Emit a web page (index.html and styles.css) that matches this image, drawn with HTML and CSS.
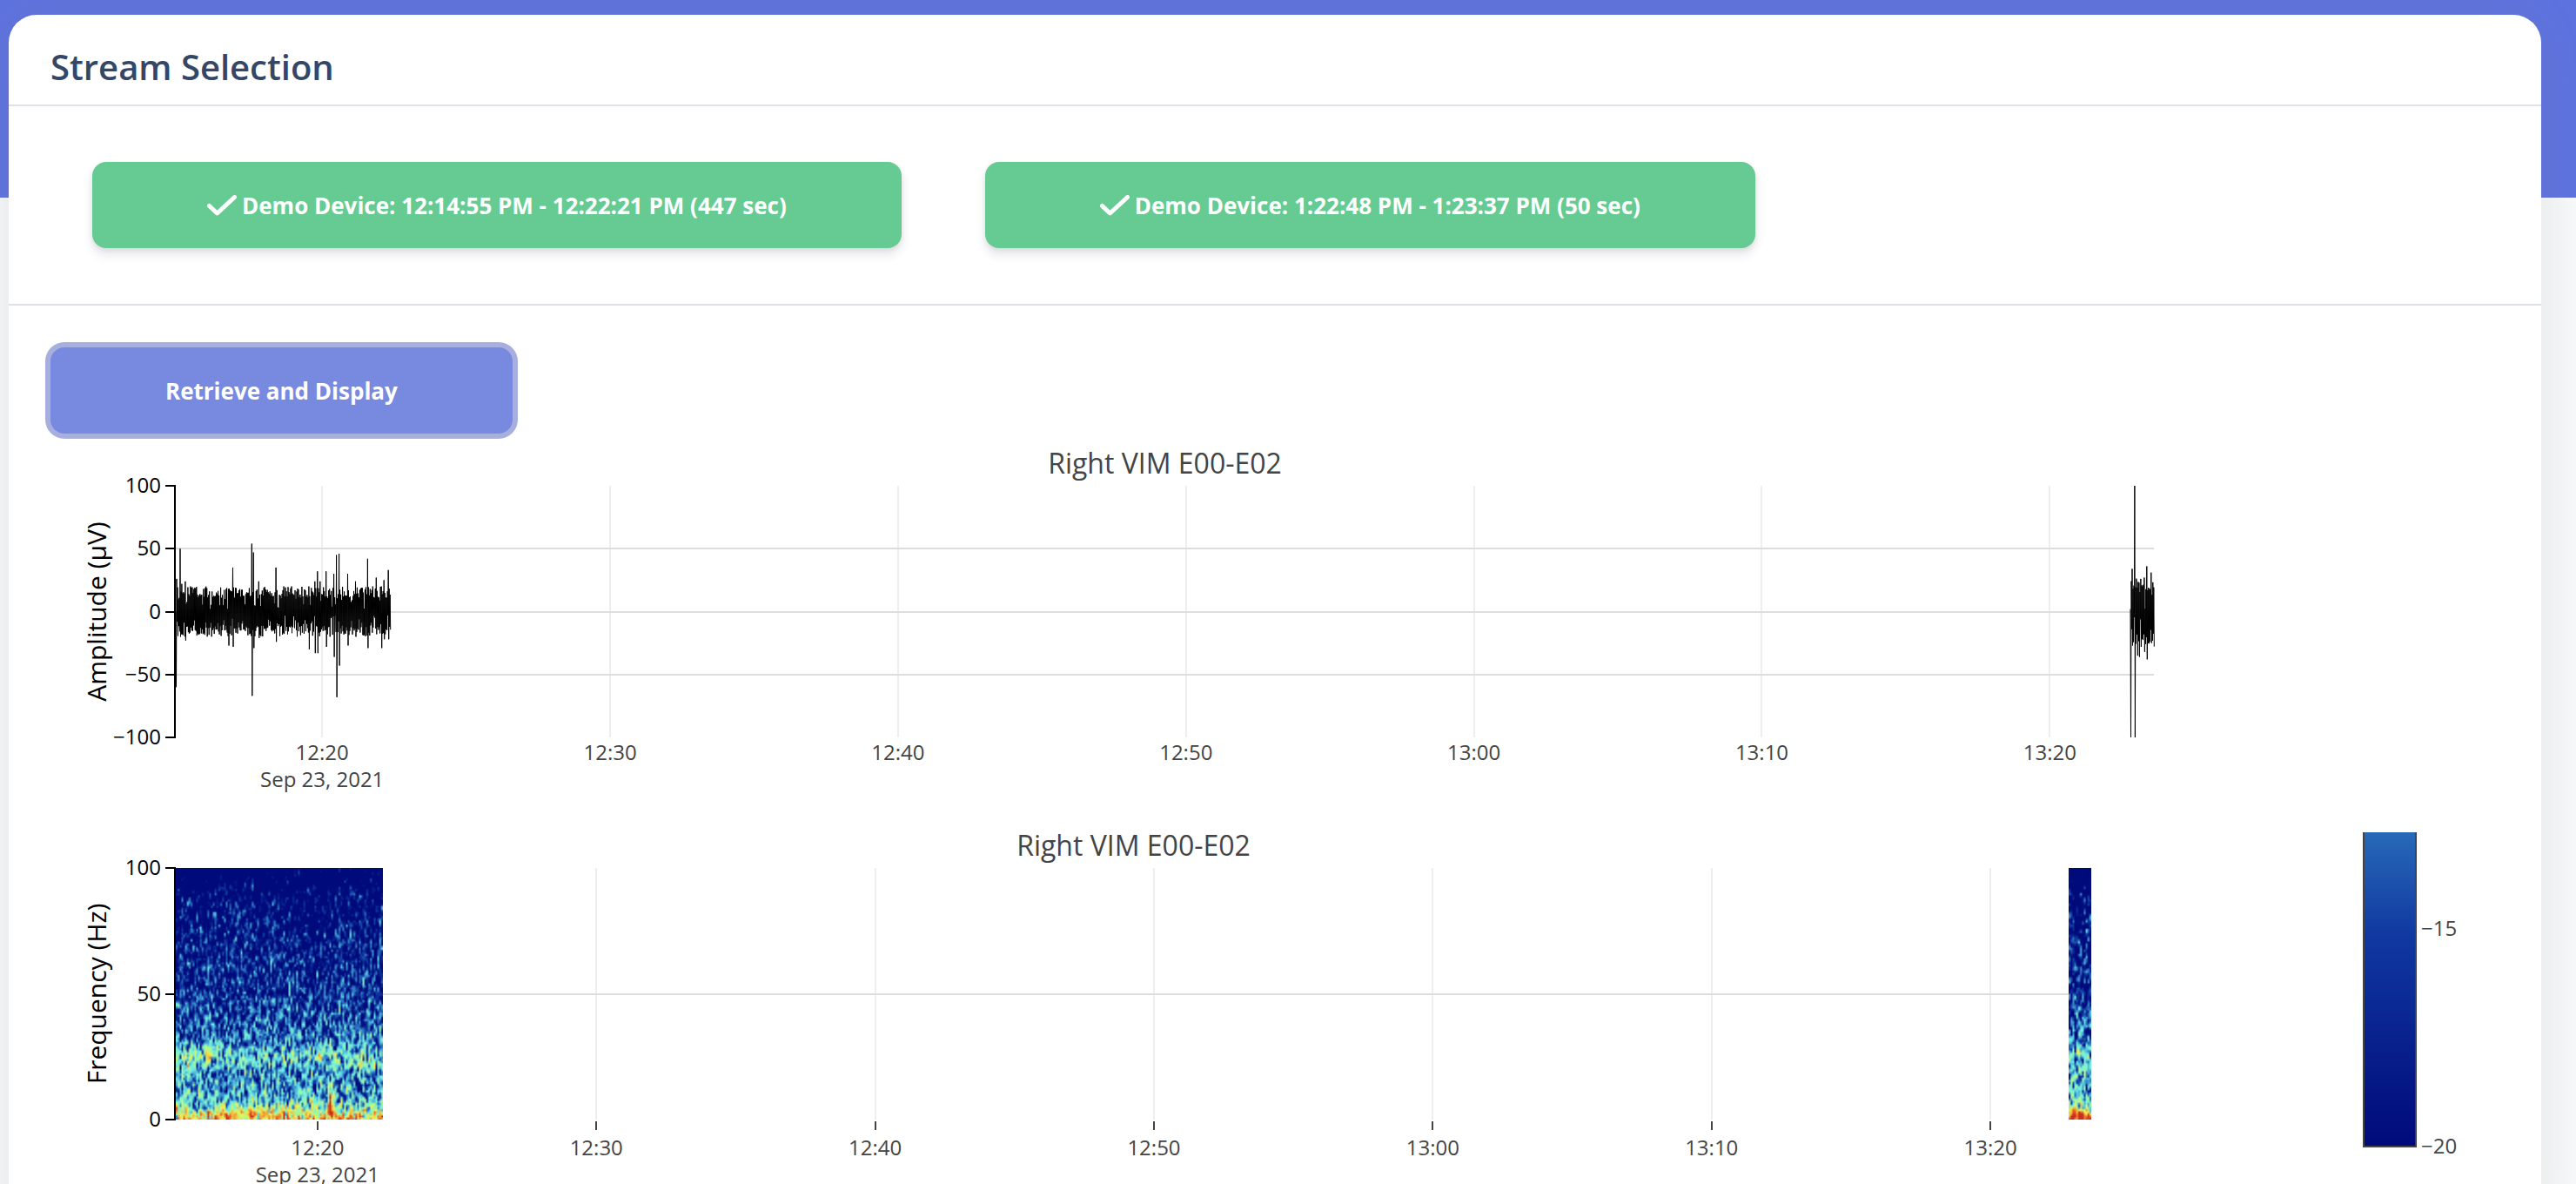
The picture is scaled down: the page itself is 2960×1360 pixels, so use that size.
FILE: index.html
```html
<!DOCTYPE html>
<html lang="en">
<head>
<meta charset="utf-8">
<meta name="viewport" content="width=device-width, initial-scale=1">
<title>Stream Selection</title>
<link rel="stylesheet" href="styles.css">
</head>
<body>
<main class="page">
  <section class="card">
    <header class="card-header">
      <h1 class="card-title">Stream Selection</h1>
    </header>
    <div class="stream-list">
      <button type="button" class="btn btn-stream" aria-pressed="true">
        <svg class="check" viewBox="0 0 34 24" aria-hidden="true"><path d="M2.5 12.5 L11.5 21 L31.5 2.5"/></svg>
        <span>Demo Device: 12:14:55 PM - 12:22:21 PM (447 sec)</span>
      </button>
      <button type="button" class="btn btn-stream" aria-pressed="true">
        <svg class="check" viewBox="0 0 34 24" aria-hidden="true"><path d="M2.5 12.5 L11.5 21 L31.5 2.5"/></svg>
        <span>Demo Device: 1:22:48 PM - 1:23:37 PM (50 sec)</span>
      </button>
    </div>
    <div class="card-body">
      <button type="button" class="btn btn-retrieve">Retrieve and Display</button>
      <div class="chart" id="amplitude"></div>
      <div class="chart" id="spectrogram"></div>
    </div>
  </section>
</main>
<script src="charts.js"></script>
</body>
</html>
```
FILE: styles.css
```css
* {
  box-sizing: border-box;
}

body {
  margin: 0;
  font-family: "Open Sans", "Noto Sans", sans-serif;
  background: #f8f9fa;
}

.page {
  height: 100vh;
  overflow-y: auto;
  scrollbar-width: none;
  padding: 17px 40px 48px 10px;
  background: linear-gradient(#5e72e0, #5e72e0) top / 100% 227px no-repeat;
}

.card {
  background: #fff;
  border-radius: 32px;
  box-shadow: 0 0 64px rgba(120, 124, 120, 0.16);
}

.card-header {
  padding: 36px 48px 19px;
  border-bottom: 2px solid #dee2e6;
}

.card-title {
  margin: 0;
  font-size: 40px;
  line-height: 48px;
  font-weight: 600;
  color: #344767;
}

.stream-list {
  display: flex;
  flex-wrap: wrap;
  gap: 32px 96px;
  padding: 64px 96px;
  border-bottom: 2px solid #dee2e6;
}

.card-body {
  padding: 48px;
}

.btn {
  display: inline-flex;
  align-items: center;
  justify-content: center;
  gap: 6px;
  min-height: 99px;
  padding: 24px 132px;
  border: 0;
  border-radius: 16px;
  font-family: inherit;
  font-size: 26px;
  line-height: 42px;
  font-weight: 700;
  color: #fff;
  cursor: pointer;
}

.btn-stream {
  background: #66cb92;
  box-shadow: 0 8px 12px rgba(50, 50, 93, 0.11), 0 2px 6px rgba(0, 0, 0, 0.08);
}

.btn-retrieve {
  background: #7889e0;
  box-shadow: 0 0 0 6px #a6afdd;
}

.check {
  width: 34px;
  height: 24px;
  fill: none;
  stroke: #fff;
  stroke-width: 5;
  stroke-linecap: round;
  stroke-linejoin: round;
}

.chart {
  position: relative;
  height: 439px;
}

.chart svg {
  display: block;
  width: 100%;
  height: 100%;
  overflow: visible;
}

.chart text {
  font-size: 24px;
  fill: #444;
}

.chart .title {
  font-size: 32px;
}

.chart .y-title {
  font-size: 30px;
  fill: #000;
}

.chart .y-label {
  fill: #000;
}

.grid-x {
  fill: #eee;
}

.grid-y {
  fill: #ddd;
}

.axis {
  fill: #000;
}

.tick {
  fill: #444;
}

.trace {
  fill: none;
  stroke: #000;
  stroke-width: 1;
}

.heat {
  position: absolute;
}
```
FILE: charts.js
```js
const NS = "http://www.w3.org/2000/svg";
const TOTAL = 4122;
const SEGMENTS = [[0, 447], [4073, 4122]];
const TICKS = ["12:20", "12:30", "12:40", "12:50", "13:00", "13:10", "13:20"];
const FIRST_TICK = 305;
const LEFT = 144;
const TOP = 60;
const PLOT_HEIGHT = 289;

function random(seed) {
  let s = seed;
  return () => {
    s = (s * 1664525 + 1013904223) % 4294967296;
    return s / 4294967296;
  };
}

function add(parent, name, attrs, text) {
  const el = document.createElementNS(NS, name);
  for (const key in attrs) el.setAttribute(key, attrs[key]);
  if (text) el.textContent = text;
  parent.appendChild(el);
  return el;
}

function rect(svg, cls, x, y, width, height) {
  return add(svg, "rect", { class: cls, x: Math.round(x), y: Math.round(y), width, height });
}

function frame(host, opts) {
  host.textContent = "";
  const svg = add(host, "svg", { role: "img", "aria-label": opts.title });
  const width = host.clientWidth - LEFT - opts.right;
  const scale = width / TOTAL;

  TICKS.forEach((label, i) => {
    const x = LEFT + (FIRST_TICK + i * 600) * scale;
    rect(svg, "grid-x", x - 1, TOP, 2, PLOT_HEIGHT);
    if (opts.xTicks) rect(svg, "tick", x - 1, TOP + PLOT_HEIGHT + 2, 2, 10);
    const base = TOP + PLOT_HEIGHT + opts.labelDrop;
    add(svg, "text", { x, y: base, "text-anchor": "middle" }, label);
    if (i === 0) add(svg, "text", { x, y: base + 31, "text-anchor": "middle" }, "Sep 23, 2021");
  });

  opts.yTicks.forEach((value, i) => {
    const y = TOP + PLOT_HEIGHT * i / (opts.yTicks.length - 1);
    if (i > 0 && i < opts.yTicks.length - 1) rect(svg, "grid-y", LEFT, y - 1, width, 2);
    rect(svg, "axis", LEFT - 12, y - 1, 12, 2);
    add(svg, "text", { class: "y-label", x: LEFT - 17, y: y + 8, "text-anchor": "end" }, value);
  });
  rect(svg, "axis", LEFT - 2, TOP - 1, 2, PLOT_HEIGHT + 2);

  add(svg, "text", { class: "title", x: LEFT + width / 2, y: 46, "text-anchor": "middle" }, opts.title);
  const mid = TOP + PLOT_HEIGHT / 2;
  add(svg, "text", {
    class: "y-title", x: 64, y: mid, "text-anchor": "middle", transform: `rotate(-90 64 ${mid})`
  }, opts.yTitle);
  return { svg, scale };
}

/* [seconds, high, low] */
const PEAKS = [
  [0, 0, -60], [3, 26, -8], [9, 50, -20], [13, 22, -18], [20, 24, -23], [33, 19, -15],
  [110, 18, -27], [120, 35, -28], [160, 54, -67], [163, 47, -29], [173, 24, -21],
  [210, 35, -24], [279, 20, -30], [290, 24, -33], [296, 32, -33], [302, 24, -16],
  [315, 32, -28], [322, 18, -20], [331, 30, -36], [336, 45, -68], [341, 46, -43],
  [359, 30, -27], [375, 24, -20], [401, 42, -29], [419, 27, -18], [429, 20, -29],
  [434, 25, -22], [444, 33, -22],
  [4073, 2, -140], [4078, 34, -27], [4083, 140, -140], [4088, 19, -35], [4092, 23, -36],
  [4096, 26, -28], [4103, 27, -32], [4109, 36, -38], [4114, 18, -24], [4118, 31, -25]
];

function drawAmplitude() {
  const { svg, scale } = frame(document.getElementById("amplitude"), {
    title: "Right VIM E00-E02", yTitle: "Amplitude (μV)", right: 397, labelDrop: 26,
    yTicks: ["100", "50", "0", "−50", "−100"]
  });
  const rnd = random(7);
  const toY = v => TOP + PLOT_HEIGHT / 2 - Math.max(-100, Math.min(100, v)) * PLOT_HEIGHT / 200;
  SEGMENTS.forEach(([from, to], part) => {
    const points = [];
    for (let t = from; t <= to; t += 1.8) {
      const peak = PEAKS.find(p => p[0] >= t && p[0] < t + 1.8);
      const gain = part ? 1.4 : 1;
      const high = peak ? peak[1] : (rnd() < 0.15 ? 2 : 11 * gain) + rnd() * 9 * gain;
      const low = peak ? peak[2] : -(rnd() < 0.15 ? 2 : 11 * gain) - rnd() * 9 * gain;
      const x = LEFT + t * scale;
      points.push([x, toY(high)], [x + 0.5, toY(low)]);
    }
    add(svg, "path", { class: "trace", d: "M" + points.map(p => p.map(n => n.toFixed(1)).join(" ")).join("L") });
  });
}

const COLORS = [
  [0, 0, 10, 122], [0.125, 16, 56, 160], [0.25, 62, 152, 208], [0.375, 110, 240, 235],
  [0.5, 160, 248, 150], [0.625, 245, 242, 80], [0.75, 240, 150, 50], [0.875, 222, 55, 35], [1, 120, 10, 5]
];
const LEVELS = [[0, 0.58], [1, 0.7], [3, 0.62], [5, 0.45], [8, 0.33], [13, 0.25], [19, 0.25], [22, 0.34], [27, 0.38], [31, 0.22], [40, 0.14], [55, 0.08], [75, 0.01], [90, -0.07], [100, -0.24]];
/* [seconds, spread in seconds, centre Hz, spread in Hz, strength] */
const BURSTS = [
  [162, 4, 0, 9, 0.32], [291, 4, 2, 9, 0.36], [333, 5, 6, 10, 0.42], [350, 5, 0, 5, 0.25], [345, 5, 22, 4, 0.2],
  [100, 14, 0, 4, 0.16], [245, 14, 0, 5, 0.14], [438, 6, 0, 5, 0.2], [30, 18, 23, 4, 0.13], [66, 12, 25, 4, 0.12],
  [307, 5, 24, 3, 0.3], [395, 5, 24, 3, 0.25], [426, 4, 22, 3, 0.2], [4080, 5, 2, 5, 0.28],
  [4098, 6, 1, 4, 0.25], [4114, 6, 1, 4, 0.25], [4097, 30, 10, 8, 0.06]
];

function lerp(table, x) {
  let i = 1;
  while (i < table.length - 1 && table[i][0] < x) i++;
  const a = table[i - 1], b = table[i];
  const k = Math.max(0, Math.min(1, (x - a[0]) / (b[0] - a[0])));
  return a.slice(1).map((v, n) => v + (b[n + 1] - v) * k);
}

function drawHeat(host, from, to, scale, seed) {
  const rnd = random(seed);
  const cols = Math.max(12, Math.round((to - from) / 4));
  const rows = 120;
  const noise = [];
  for (let i = 0; i < cols * (rows + 2); i++) {
    noise.push(Math.max(-0.5, 0.17 * Math.log(-Math.log(1 - rnd() * 0.999) + 0.01) + 0.07));
  }
  const canvas = document.createElement("canvas");
  canvas.className = "heat";
  canvas.width = cols;
  canvas.height = rows;
  canvas.style.left = `${Math.round(LEFT + from * scale)}px`;
  canvas.style.top = `${TOP}px`;
  canvas.style.width = `${Math.floor((to - from) * scale)}px`;
  canvas.style.height = `${PLOT_HEIGHT}px`;
  const ctx = canvas.getContext("2d");
  const image = ctx.createImageData(cols, rows);
  for (let r = 0; r < rows; r++) {
    for (let c = 0; c < cols; c++) {
      const hz = 100 - r * 100 / rows;
      const t = from + c * (to - from) / cols;
      const i = r * cols + c;
      let v = lerp(LEVELS, hz)[0] + 0.45 * noise[i] + 0.5 * noise[i + cols] + 0.4 * noise[i + 2 * cols];
      for (const b of BURSTS) {
        v += b[4] * Math.exp(-(((t - b[0]) / b[1]) ** 2) - ((hz - b[2]) / b[3]) ** 2);
      }
      const rgb = lerp(COLORS, Math.max(0, Math.min(0.9, v)));
      image.data.set([rgb[0], rgb[1], rgb[2], 255], i * 4);
    }
  }
  ctx.putImageData(image, 0, 0);
  host.appendChild(canvas);
}

function drawSpectrogram() {
  const host = document.getElementById("spectrogram");
  const { svg, scale } = frame(host, {
    title: "Right VIM E00-E02", yTitle: "Frequency (Hz)", right: 469, labelDrop: 41, xTicks: true,
    yTicks: ["100", "50", "0"]
  });
  SEGMENTS.forEach(([from, to], i) => drawHeat(host, from, to, scale, 31 + i));

  const x = host.clientWidth - 157;
  const gradient = add(add(svg, "defs", {}), "linearGradient", { id: "bar", x1: 0, y1: 0, x2: 0, y2: 1 });
  [[0, "#2869b8"], [0.33, "#1038a0"], [1, "#000a7a"]].forEach(([offset, color]) =>
    add(gradient, "stop", { offset, "stop-color": color }));
  rect(svg, "tick", x, 19, 62, 362);
  add(svg, "rect", { fill: "url(#bar)", x: x + 2, y: 19, width: 58, height: 360 });
  add(svg, "text", { x: x + 67, y: 138 }, "−15");
  add(svg, "text", { x: x + 67, y: 388 }, "−20");
}

function draw() {
  drawAmplitude();
  drawSpectrogram();
}

draw();
window.addEventListener("resize", draw);
```
